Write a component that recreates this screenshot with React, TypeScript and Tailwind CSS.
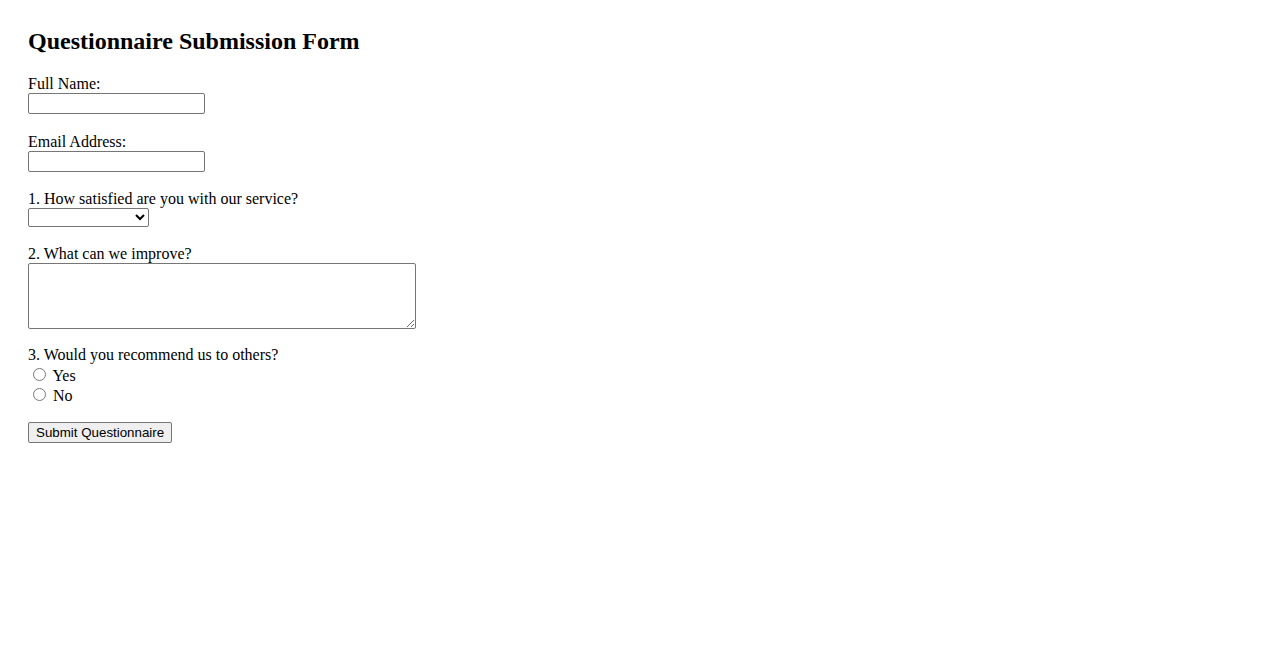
import { useState } from "react";

const fieldClass =
  "w-[177px] h-[21px] px-[2px] py-[1px] border border-[#767676] rounded-[2px] bg-white text-[13.333px] font-['Liberation_Sans',Arial,sans-serif] align-baseline";

export default function App() {
  const [recommend, setRecommend] = useState<string>("");

  return (
    <div className="min-h-screen bg-white px-[28px] pt-[28px] font-['Liberation_Serif','Times_New_Roman',serif] text-[16px] leading-[normal] text-black">
      <h2 className="mb-[20px] text-[24px] font-bold leading-[normal]">Questionnaire Submission Form</h2>

      <form onSubmit={(e) => e.preventDefault()}>
        <div className="mb-[18.5px]">
          <label htmlFor="name" className="block">Full Name:</label>
          <input id="name" type="text" className={fieldClass} />
        </div>

        <div className="mb-[18.5px]">
          <label htmlFor="email" className="block">Email Address:</label>
          <input id="email" type="email" className={fieldClass} />
        </div>

        <div className="mb-[18px]">
          <label htmlFor="satisfaction" className="block">1. How satisfied are you with our service?</label>
          <select
            id="satisfaction"
            defaultValue=""
            className="w-[121px] h-[19px] border border-[#767676] rounded-[2px] bg-white text-[13.333px] font-['Liberation_Sans',Arial,sans-serif] align-baseline"
          >
            <option value=""></option>
            <option value="very">Very satisfied</option>
            <option value="ok">Satisfied</option>
            <option value="no">Not satisfied</option>
          </select>
        </div>

        <div className="mb-[13px]">
          <label htmlFor="improve" className="block">2. What can we improve?</label>
          <textarea
            id="improve"
            className="w-[388px] h-[66px] px-[2px] py-[2px] border border-[#767676] rounded-[2px] bg-white text-[13.333px] font-['Liberation_Mono',monospace] align-baseline resize"
          />
        </div>

        <div className="mb-[17px]">
          <label className="mb-[1px] block">3. Would you recommend us to others?</label>
          <input
            type="radio"
            name="recommend"
            value="yes"
            checked={recommend === "yes"}
            onChange={() => setRecommend("yes")}
            className="ml-[5px] mr-[3px] mt-[3px] h-[13px] w-[13px] align-baseline"
          />{" "}
          Yes
          <br />
          <input
            type="radio"
            name="recommend"
            value="no"
            checked={recommend === "no"}
            onChange={() => setRecommend("no")}
            className="ml-[5px] mr-[3px] mt-[3px] h-[13px] w-[13px] align-baseline"
          />{" "}
          No
        </div>

        <button
          type="submit"
          className="h-[21px] px-[7px] border border-[#767676] rounded-[2px] bg-[#efefef] text-[13.333px] leading-[normal] font-['Liberation_Sans',Arial,sans-serif] text-black"
        >
          Submit Questionnaire
        </button>
      </form>
    </div>
  );
}
